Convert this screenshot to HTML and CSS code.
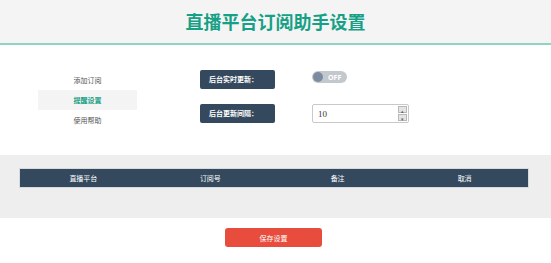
FILE: index.html
```html
<!DOCTYPE html>
<html lang="zh-CN">
<head>
    <meta charset="UTF-8">
    <meta name="viewport" content="width=device-width, initial-scale=1.0">
    <title>直播平台订阅助手设置</title>
    <link rel="stylesheet" href="styles.css">
</head>
<body>
    <header class="topbar">
        <h1>直播平台订阅助手设置</h1>
    </header>

    <div class="settings">
        <nav class="side">
            <a class="side-item">添加订阅</a>
            <a class="side-item active">提醒设置</a>
            <a class="side-item">使用帮助</a>
        </nav>

        <div class="form">
            <div class="form-row">
                <span class="label">后台实时更新：</span>
                <div class="switch">
                    <span class="knob"></span>
                    <span class="switch-text">OFF</span>
                </div>
            </div>
            <div class="form-row">
                <span class="label">后台更新间隔：</span>
                <div class="number">
                    <span class="number-value">10</span>
                    <span class="spin">
                        <span class="spin-btn">&#9652;</span>
                        <span class="spin-btn">&#9662;</span>
                    </span>
                </div>
            </div>
        </div>
    </div>

    <section class="subs">
        <table class="subs-table">
            <thead>
                <tr>
                    <th>直播平台</th>
                    <th>订阅号</th>
                    <th>备注</th>
                    <th>取消</th>
                </tr>
            </thead>
        </table>
    </section>

    <div class="actions">
        <button class="save-btn">保存设置</button>
    </div>
</body>
</html>
```

FILE: styles.css
```css
body {
    margin: 0;
    background: #fff;
    font-family: "Noto Sans CJK SC", "Noto Sans", sans-serif;
    color: #555;
}

.topbar {
    height: 43px;
    background: #f4f4f4;
    border-bottom: 2px solid #8fd3c1;
    display: flex;
    align-items: center;
    justify-content: center;
}

.topbar h1 {
    margin: 0;
    font-size: 18px;
    line-height: 18px;
    font-weight: bold;
    color: #16a085;
    padding-bottom: 1px;
}

.settings {
    display: flex;
    padding: 25px 0 25px 38px;
}

.side {
    width: 99px;
    display: flex;
    flex-direction: column;
}

.side-item {
    height: 20px;
    line-height: 20px;
    text-align: center;
    font-size: 7px;
    color: #555;
}

.side-item.active {
    background: #f4f4f4;
    color: #16a085;
    font-weight: bold;
}

.form {
    margin-left: 63px;
    display: flex;
    flex-direction: column;
    gap: 15px;
}

.form-row {
    display: flex;
    gap: 37px;
}

.label {
    width: 66px;
    height: 19px;
    line-height: 19px;
    padding-left: 9px;
    background: #34495e;
    color: #fff;
    font-size: 7px;
    font-weight: bold;
    border-radius: 2px;
}

.switch {
    margin-top: 1px;
    width: 35px;
    height: 12px;
    border-radius: 6px;
    background: #c3c8cd;
    display: flex;
    align-items: center;
    gap: 5px;
}

.knob {
    width: 10px;
    height: 10px;
    margin-left: 1px;
    border-radius: 50%;
    background: #7c8ca0;
}

.switch-text {
    font-family: "Open Sans", sans-serif;
    font-size: 7px;
    font-weight: bold;
    color: #fff;
}

.number {
    box-sizing: border-box;
    width: 97px;
    height: 19px;
    border: 1px solid #c9c9c9;
    border-radius: 2px;
    display: flex;
    align-items: center;
    justify-content: space-between;
    padding: 0 1px 0 5px;
}

.number-value {
    font-family: "Liberation Serif", serif;
    font-size: 9px;
    color: #333;
}

.spin {
    display: flex;
    flex-direction: column;
    gap: 1px;
}

.spin-btn {
    width: 9px;
    height: 7px;
    line-height: 7px;
    text-align: center;
    background: #e4e4e4;
    border: 1px solid #b8b8b8;
    box-sizing: border-box;
    font-size: 5px;
    color: #666;
}

.subs {
    background: #eeeeee;
    padding: 13px 0 30px 19px;
}

.subs-table {
    width: 510px;
    border-collapse: collapse;
    background: #34495e;
    border: 1px solid #d6dbe0;
}

.subs-table th {
    width: 25%;
    height: 18px;
    padding: 0;
    font-size: 7px;
    font-weight: normal;
    color: #fff;
}

.actions {
    display: flex;
    justify-content: center;
    padding: 10px 4px 0 0;
}

.save-btn {
    width: 97px;
    height: 19px;
    border: none;
    border-radius: 3px;
    background: #e74c3c;
    color: #fff;
    font-family: "Noto Sans CJK SC", sans-serif;
    font-size: 7px;
    padding: 0;
}
```
